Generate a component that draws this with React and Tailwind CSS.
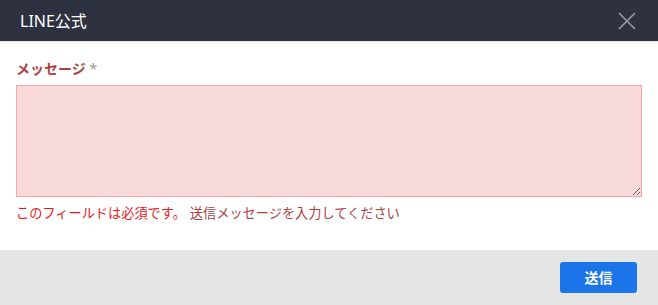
import React from "react";

export default function App() {
  return (
    <div
      className="w-[658px] h-[305px] flex flex-col bg-white"
      style={{ fontFamily: '"Noto Sans", "Noto Sans CJK JP", sans-serif' }}
    >
      {/* header */}
      <div className="h-[42px] bg-[#2e3240] flex items-center justify-between pl-[20px] pr-[20px] border-b border-[#e6e6e6]">
        <span className="text-white text-[16px] leading-none">LINE公式</span>
        <svg width="20" height="20" viewBox="0 0 20 20" className="mr-[1px]">
          <path d="M2 2 L18 18 M18 2 L2 18" stroke="#9a9ca3" strokeWidth="1.6" />
        </svg>
      </div>

      {/* body */}
      <div className="flex-1 px-[16px] pt-[17px]">
        <div className="text-[14px] font-bold text-[#a94442] leading-[20px] mb-[6px]">
          メッセージ <span className="text-[#999] font-normal">*</span>
        </div>
        <textarea
          className="block w-full h-[112px] bg-[#f7d9da] border border-[#f4a6a6] resize-y outline-none"
        />
        <div className="mt-[6px] text-[13.2px] leading-[20px]">
          <span className="text-[#e8191e]">このフィールドは必須です。</span>
          <span className="text-[#a94442] ml-[4px]">送信メッセージを入力してください</span>
        </div>
      </div>

      {/* footer */}
      <div className="h-[55px] bg-[#e5e5e5] flex items-center justify-end pr-[21px]">
        <button className="w-[77px] h-[31px] rounded-[3px] bg-[#1c74e9] text-white text-[14px] font-bold">
          送信
        </button>
      </div>
    </div>
  );
}
